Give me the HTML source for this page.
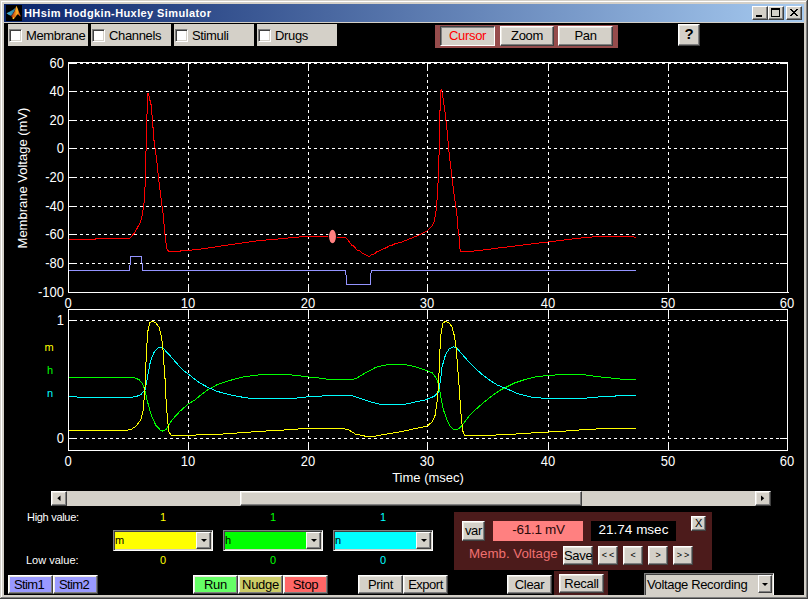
<!DOCTYPE html>
<html><head><meta charset="utf-8"><title>HHsim Hodgkin-Huxley Simulator</title>
<style>
html,body{margin:0;padding:0;background:#000;}
body{width:808px;height:599px;overflow:hidden;position:relative;font-family:"Liberation Sans",Arial,sans-serif;font-size:13px;color:#000;}
#win{position:absolute;left:0;top:0;width:808px;height:599px;background:#000;overflow:hidden;}
.abs,#win div,#win span{position:absolute;box-sizing:border-box;white-space:nowrap;}
/* frame */
.fr{background:#d4d0c8;}
#title{left:4px;top:4px;width:800px;height:18px;background:linear-gradient(90deg,#0a246a 0%,#a6caf0 100%);}
#ttext{left:20px;top:1px;color:#fff;font-weight:bold;font-size:11px;line-height:16px;letter-spacing:0.4px;font-family:"Liberation Sans",sans-serif;}
.tb{top:2px;width:16px;height:14px;background:#d4d0c8;border:1px solid;border-color:#fff #404040 #404040 #fff;box-shadow:inset -1px -1px 0 #808080;}
/* generic button */
.btn{background:#d4d0c8;border:1px solid;border-color:#fff #404040 #404040 #fff;box-shadow:inset -1px -1px 0 #808080, inset 1px 1px 0 #ece9e2;text-align:center;font-size:13px;line-height:17px;color:#000;letter-spacing:-0.3px;}
.sunk{border-color:#404040 #fff #fff #404040;box-shadow:inset 1px 1px 0 #808080;}
.cbp{top:24px;width:80px;height:22px;background:#d4d0c8;font-size:13px;line-height:23px;}
.cb{left:1px;top:5px;width:13px;height:13px;background:#fff;border:1px solid;border-color:#808080 #fff #fff #808080;box-shadow:inset 1px 1px 0 #404040, inset -1px -1px 0 #d4d0c8;}
.cbt{left:18px;top:0;letter-spacing:-0.35px;}
.plot{position:absolute;left:0;top:0;}
.plot .g{stroke-dasharray:3 3;}
.yl{left:9px;width:55px;text-align:right;color:#fff;font-size:13px;line-height:16px;height:16px;transform:scaleY(1.08);transform-origin:50% 50%;}
.xl{width:40px;text-align:center;color:#fff;font-size:13px;line-height:16px;height:16px;transform:scaleY(1.08);transform-origin:50% 50%;}
.sm{font-size:11px;line-height:13px;}
.pop{height:21px;border:1px solid;border-color:#808080 #fff #fff #808080;box-shadow:inset 1px 1px 0 #404040, inset -1px -1px 0 #d4d0c8;}
.pop .pt{left:1px;top:2px;font-size:11px;line-height:14px;color:#000;}
.pop .ab{right:1px;top:1px;width:15px;height:17px;background:#d4d0c8;border:1px solid;border-color:#fff #404040 #404040 #fff;box-shadow:inset -1px -1px 0 #808080;}
.tri{width:0;height:0;border-left:3px solid transparent;border-right:3px solid transparent;border-top:3px solid #000;}
</style></head><body>
<div id="win">
<!-- window frame -->
<div class="fr" style="left:0;top:0;width:808px;height:23px"></div>
<div class="fr" style="left:0;top:0;width:4px;height:599px"></div>
<div class="fr" style="left:804px;top:0;width:4px;height:599px"></div>
<div class="fr" style="left:0;top:595px;width:808px;height:4px"></div>
<div style="left:1px;top:1px;width:805px;height:1px;background:#fff"></div>
<div style="left:1px;top:1px;width:1px;height:596px;background:#fff"></div>
<div style="left:806px;top:1px;width:1px;height:597px;background:#808080"></div>
<div style="left:1px;top:597px;width:806px;height:1px;background:#808080"></div>
<div style="left:807px;top:0;width:1px;height:599px;background:#404040"></div>
<div style="left:0;top:598px;width:808px;height:1px;background:#404040"></div>
<div id="title">
  <div style="left:2px;top:1px;width:16px;height:16px;background:#000"></div>
  <svg style="position:absolute;left:2px;top:1px" width="16" height="16" viewBox="0 0 16 16">
    <defs>
      <linearGradient id="og" x1="0" y1="0" x2="1" y2="0"><stop offset="0" stop-color="#b5300f"/><stop offset="0.45" stop-color="#f08a1c"/><stop offset="0.6" stop-color="#fbc02d"/><stop offset="0.8" stop-color="#e65a14"/><stop offset="1" stop-color="#c0390f"/></linearGradient>
      <linearGradient id="bg" x1="0" y1="0" x2="1" y2="0"><stop offset="0" stop-color="#46b4dc"/><stop offset="1" stop-color="#2a7896"/></linearGradient>
    </defs>
    <polygon points="0.5,8.2 4,6.6 7.4,4.4 9.6,2.4 8.6,6 6.5,9 5,10.8 3,10" fill="url(#bg)"/>
    <polygon points="5,10.8 6.5,9 8.6,6 9.6,2.6 9.2,7 7,10.5 5.6,11.4" fill="#6b3a3a"/>
    <polygon points="10.3,0.8 11.5,3 13,7 15,11.8 13.5,10.8 12,9.3 11,9.8 9.5,12 8,13.8 7,14.3 6.3,12.5 5.4,11.2 7,9.4 8.7,6.4 9.6,3" fill="url(#og)"/>
    <polygon points="6.6,13 8,12 8.2,13.6 7,14.3" fill="#fdd835"/>
  </svg>
  <div id="ttext">HHsim Hodgkin-Huxley Simulator</div>
  <div class="tb" style="left:748px"><div style="left:3px;top:8px;width:6px;height:2px;background:#000"></div></div>
  <div class="tb" style="left:764px"><div style="left:2px;top:1px;width:9px;height:9px;border:1px solid #000;border-top-width:2px"></div></div>
  <div class="tb" style="left:782px"><svg style="position:absolute;left:3px;top:2px" width="8" height="7" viewBox="0 0 8 7" shape-rendering="crispEdges"><path d="M0 0h2v1h-2zM6 0h2v1h-2zM1 1h2v1h-2zM5 1h2v1h-2zM2 2h4v1h-4zM3 3h2v1h-2zM2 4h4v1h-4zM1 5h2v1h-2zM5 5h2v1h-2zM0 6h2v1h-2zM6 6h2v1h-2z" fill="#000"/></svg></div>
</div>

<!-- top row -->
<div class="cbp" style="left:8px"><div class="cb"></div><div class="cbt">Membrane</div></div>
<div class="cbp" style="left:91px"><div class="cb"></div><div class="cbt">Channels</div></div>
<div class="cbp" style="left:174px"><div class="cb"></div><div class="cbt">Stimuli</div></div>
<div class="cbp" style="left:257px"><div class="cb"></div><div class="cbt">Drugs</div></div>

<div style="left:435px;top:25px;width:183px;height:23px;background:#964c4c"></div>
<div class="btn sunk" style="left:440px;top:26px;width:55px;height:20px;color:#f00;line-height:18px">Cursor</div>
<div class="btn" style="left:500px;top:26px;width:54px;height:20px;line-height:18px">Zoom</div>
<div class="btn" style="left:558px;top:26px;width:55px;height:20px;line-height:18px">Pan</div>
<div class="btn" style="left:678px;top:24px;width:22px;height:22px;font-weight:bold;font-size:15px;line-height:18px;letter-spacing:0">?</div>

<svg class="plot" width="808" height="599" viewBox="0 0 808 599" shape-rendering="crispEdges">
<g fill="none" stroke="#fff" stroke-width="1">
<line x1="68" y1="63.5" x2="788" y2="63.5" class="g"/>
<line x1="68" y1="91.5" x2="788" y2="91.5" class="g"/>
<line x1="68" y1="120.5" x2="788" y2="120.5" class="g"/>
<line x1="68" y1="148.5" x2="788" y2="148.5" class="g"/>
<line x1="68" y1="177.5" x2="788" y2="177.5" class="g"/>
<line x1="68" y1="206.5" x2="788" y2="206.5" class="g"/>
<line x1="68" y1="234.5" x2="788" y2="234.5" class="g"/>
<line x1="68" y1="263.5" x2="788" y2="263.5" class="g"/>
<line x1="188.5" y1="293" x2="188.5" y2="63" class="g"/>
<line x1="308.5" y1="293" x2="308.5" y2="63" class="g"/>
<line x1="427.5" y1="293" x2="427.5" y2="63" class="g"/>
<line x1="548.5" y1="293" x2="548.5" y2="63" class="g"/>
<line x1="668.5" y1="293" x2="668.5" y2="63" class="g"/>
<line x1="68" y1="320.5" x2="788" y2="320.5" class="g"/>
<line x1="68" y1="438.5" x2="788" y2="438.5" class="g"/>
<line x1="188.5" y1="451" x2="188.5" y2="310" class="g"/>
<line x1="308.5" y1="451" x2="308.5" y2="310" class="g"/>
<line x1="427.5" y1="451" x2="427.5" y2="310" class="g"/>
<line x1="548.5" y1="451" x2="548.5" y2="310" class="g"/>
<line x1="668.5" y1="451" x2="668.5" y2="310" class="g"/>
<line x1="68" y1="63.5" x2="76" y2="63.5" class="a"/>
<line x1="780" y1="63.5" x2="788" y2="63.5" class="a"/>
<line x1="68" y1="91.5" x2="76" y2="91.5" class="a"/>
<line x1="780" y1="91.5" x2="788" y2="91.5" class="a"/>
<line x1="68" y1="120.5" x2="76" y2="120.5" class="a"/>
<line x1="780" y1="120.5" x2="788" y2="120.5" class="a"/>
<line x1="68" y1="148.5" x2="76" y2="148.5" class="a"/>
<line x1="780" y1="148.5" x2="788" y2="148.5" class="a"/>
<line x1="68" y1="177.5" x2="76" y2="177.5" class="a"/>
<line x1="780" y1="177.5" x2="788" y2="177.5" class="a"/>
<line x1="68" y1="206.5" x2="76" y2="206.5" class="a"/>
<line x1="780" y1="206.5" x2="788" y2="206.5" class="a"/>
<line x1="68" y1="234.5" x2="76" y2="234.5" class="a"/>
<line x1="780" y1="234.5" x2="788" y2="234.5" class="a"/>
<line x1="68" y1="263.5" x2="76" y2="263.5" class="a"/>
<line x1="780" y1="263.5" x2="788" y2="263.5" class="a"/>
<line x1="68" y1="292.5" x2="76" y2="292.5" class="a"/>
<line x1="780" y1="292.5" x2="788" y2="292.5" class="a"/>
<line x1="68.5" y1="285" x2="68.5" y2="293" class="a"/>
<line x1="68.5" y1="62" x2="68.5" y2="70" class="a"/>
<line x1="68.5" y1="443" x2="68.5" y2="451" class="a"/>
<line x1="68.5" y1="309" x2="68.5" y2="317" class="a"/>
<line x1="188.5" y1="285" x2="188.5" y2="293" class="a"/>
<line x1="188.5" y1="62" x2="188.5" y2="70" class="a"/>
<line x1="188.5" y1="443" x2="188.5" y2="451" class="a"/>
<line x1="188.5" y1="309" x2="188.5" y2="317" class="a"/>
<line x1="308.5" y1="285" x2="308.5" y2="293" class="a"/>
<line x1="308.5" y1="62" x2="308.5" y2="70" class="a"/>
<line x1="308.5" y1="443" x2="308.5" y2="451" class="a"/>
<line x1="308.5" y1="309" x2="308.5" y2="317" class="a"/>
<line x1="427.5" y1="285" x2="427.5" y2="293" class="a"/>
<line x1="427.5" y1="62" x2="427.5" y2="70" class="a"/>
<line x1="427.5" y1="443" x2="427.5" y2="451" class="a"/>
<line x1="427.5" y1="309" x2="427.5" y2="317" class="a"/>
<line x1="548.5" y1="285" x2="548.5" y2="293" class="a"/>
<line x1="548.5" y1="62" x2="548.5" y2="70" class="a"/>
<line x1="548.5" y1="443" x2="548.5" y2="451" class="a"/>
<line x1="548.5" y1="309" x2="548.5" y2="317" class="a"/>
<line x1="668.5" y1="285" x2="668.5" y2="293" class="a"/>
<line x1="668.5" y1="62" x2="668.5" y2="70" class="a"/>
<line x1="668.5" y1="443" x2="668.5" y2="451" class="a"/>
<line x1="668.5" y1="309" x2="668.5" y2="317" class="a"/>
<line x1="787.5" y1="285" x2="787.5" y2="293" class="a"/>
<line x1="787.5" y1="62" x2="787.5" y2="70" class="a"/>
<line x1="787.5" y1="443" x2="787.5" y2="451" class="a"/>
<line x1="787.5" y1="309" x2="787.5" y2="317" class="a"/>
<line x1="68" y1="320.5" x2="76" y2="320.5" class="a"/>
<line x1="780" y1="320.5" x2="788" y2="320.5" class="a"/>
<line x1="68" y1="438.5" x2="76" y2="438.5" class="a"/>
<line x1="780" y1="438.5" x2="788" y2="438.5" class="a"/>
</g>
<g fill="none" stroke-width="1">
<polyline stroke="#9494ff" points="68.2,270.6 129.5,270.6 130.7,256.7 141.5,256.7 142.7,270.6 345.7,270.6 346.7,284.8 370.0,284.8 371.2,270.6 636.2,270.6"/>
<polyline stroke="#ff0000" points="68.2,239.9 95.6,239.9 95.8,238.9 129.5,238.6 134.5,233.0 138.2,226.3 140.4,222.1 142.4,214.2 143.5,207.3 144.4,200.3 145.2,183.8 145.5,158.3 146.7,140.3 146.7,114.3 147.9,113.6 147.9,92.6 149.0,96.3 151.2,105.3 152.7,123.3 154.2,142.9 156.7,159.8 158.5,177.8 162.0,206.3 162.8,210.3 164.2,226.3 165.5,239.9 167.2,249.8 169.2,251.8 177.0,251.3 188.9,250.3 202.8,248.8 220.0,246.2 239.8,243.3 259.6,240.5 279.4,238.9 293.2,237.5 305.2,236.5 328.9,236.5 340.2,237.8 345.8,237.8 349.5,242.0 352.1,245.5 354.3,246.3 356.2,249.3 358.0,250.6 359.9,250.8 362.5,253.3 365.1,254.7 367.3,255.8 369.2,256.9 371.4,254.9 374.0,254.3 376.6,251.9 378.8,251.3 381.0,249.8 383.3,248.7 386.2,247.8 388.5,246.2 391.4,245.6 394.4,244.0 397.4,243.1 400.2,242.6 409.5,238.9 419.4,235.0 427.3,231.0 431.3,227.0 433.7,223.1 435.0,216.9 435.6,214.2 436.5,206.3 437.7,192.1 438.9,158.3 439.5,140.3 439.5,110.6 440.7,109.8 440.7,90.3 441.5,89.6 442.2,92.6 444.5,108.3 446.7,126.3 448.7,148.9 449.7,158.3 452.0,177.8 454.2,195.8 456.0,207.8 457.0,216.1 457.7,226.3 459.0,235.9 460.2,251.4 470.9,251.4 484.8,249.8 500.0,247.8 519.8,245.4 548.5,241.9 569.3,239.3 585.2,237.5 599.0,236.5 632.7,236.5 635.6,237.5"/>
<polyline stroke="#00ff00" points="69.0,377.7 134.7,377.7 139.1,379.8 142.2,383.3 144.7,389.3 147.4,401.3 151.3,415.3 155.7,425.0 160.1,429.9 162.7,431.1 166.2,429.4 168.8,425.0 172.3,419.7 179.4,411.8 188.1,404.0 195.1,399.9 199.0,396.4 207.7,389.9 216.5,385.0 225.2,382.0 234.0,379.2 242.8,377.1 251.5,375.7 260.3,374.8 290.1,374.8 302.3,376.2 312.9,377.4 321.6,378.3 330.7,379.7 351.7,379.7 357.0,378.0 365.8,372.7 376.3,367.1 386.8,364.8 406.1,364.8 414.8,366.6 425.3,370.1 432.3,372.7 436.7,378.8 439.0,386.8 440.7,396.3 443.3,409.4 447.7,421.8 450.7,427.0 454.2,429.7 457.7,429.5 461.7,426.0 468.7,416.4 475.8,409.4 482.8,403.2 491.5,396.2 500.3,390.1 505.5,387.5 514.3,383.1 524.8,379.6 535.3,376.9 549.4,375.2 560.2,374.8 584.9,374.8 597.2,376.7 607.7,377.6 615.5,378.5 626.1,379.7 636.0,379.7"/>
<polyline stroke="#00ffff" points="69.0,396.8 76.8,396.8 77.2,397.8 121.5,397.8 135.5,396.8 140.8,394.7 145.2,389.4 147.8,375.4 150.4,361.4 153.9,352.6 157.4,348.2 160.4,347.3 163.6,348.8 168.8,354.3 175.8,362.3 182.9,370.1 189.9,375.4 199.0,382.4 207.7,387.3 216.5,391.1 225.2,393.7 237.5,396.4 251.5,398.5 291.8,398.5 309.4,396.7 327.2,395.7 351.7,395.7 358.7,397.8 369.3,401.6 381.5,404.6 402.6,404.6 413.1,402.5 425.3,399.9 434.1,396.4 438.5,392.0 440.2,382.4 442.1,366.6 445.6,354.4 449.1,349.1 453.5,346.8 457.0,348.2 462.3,354.4 469.3,362.3 476.3,369.3 483.3,375.4 490.3,380.6 497.3,385.0 505.5,388.3 517.8,393.6 531.8,397.1 545.8,398.5 586.6,398.5 587.5,397.6 603.3,396.7 619.1,395.8 636.0,395.8"/>
<polyline stroke="#ffff00" points="69.0,430.8 124.2,430.8 131.2,429.4 136.4,425.9 140.8,419.7 142.9,411.8 144.8,392.3 146.4,352.6 147.8,331.6 149.6,322.8 152.2,321.4 155.7,322.8 159.2,327.2 161.0,335.1 162.7,345.6 163.9,363.1 165.3,382.4 166.2,403.1 168.0,424.1 168.8,432.0 171.5,435.5 190.2,435.8 197.2,434.9 223.5,434.0 242.8,432.6 260.3,431.4 274.3,430.5 290.1,429.7 305.8,428.4 343.0,428.4 349.1,430.0 355.2,434.0 365.8,436.3 374.5,436.3 386.8,434.0 402.6,431.4 418.3,427.9 427.1,426.2 432.3,421.8 435.0,415.6 436.7,405.1 438.5,386.3 439.8,352.6 441.2,331.6 443.0,322.8 445.6,321.4 449.1,322.8 452.1,327.2 454.4,336.0 456.1,347.4 457.5,364.9 459.1,386.6 460.9,412.9 462.6,430.4 464.4,435.3 489.8,435.3 517.8,433.9 535.3,432.7 553.3,431.8 567.4,430.9 583.1,429.7 599.8,428.8 636.0,428.8"/>
</g>
<g fill="none" stroke="#fff" stroke-width="1"><rect x="68.5" y="62.5" width="719" height="230" class="a"/>
<line x1="787" y1="292.5" x2="789" y2="292.5"/>
<rect x="68.5" y="309.5" width="719" height="141" class="a"/>
</g>
<ellipse cx="332.5" cy="236.5" rx="4.4" ry="7.7" fill="#000" shape-rendering="auto"/>
<ellipse cx="332.5" cy="236.5" rx="3.45" ry="6.8" fill="#ff8080" shape-rendering="auto"/>
</svg>
<div class="yl" style="top:56px">60</div>
<div class="yl" style="top:84px">40</div>
<div class="yl" style="top:113px">20</div>
<div class="yl" style="top:141px">0</div>
<div class="yl" style="top:170px">-20</div>
<div class="yl" style="top:199px">-40</div>
<div class="yl" style="top:227px">-60</div>
<div class="yl" style="top:256px">-80</div>
<div class="yl" style="top:285px">-100</div>
<div class="xl" style="left:48px;top:296px">0</div>
<div class="xl" style="left:48px;top:454px">0</div>
<div class="xl" style="left:168px;top:296px">10</div>
<div class="xl" style="left:168px;top:454px">10</div>
<div class="xl" style="left:288px;top:296px">20</div>
<div class="xl" style="left:288px;top:454px">20</div>
<div class="xl" style="left:407px;top:296px">30</div>
<div class="xl" style="left:407px;top:454px">30</div>
<div class="xl" style="left:528px;top:296px">40</div>
<div class="xl" style="left:528px;top:454px">40</div>
<div class="xl" style="left:648px;top:296px">50</div>
<div class="xl" style="left:648px;top:454px">50</div>
<div class="xl" style="left:767px;top:296px">60</div>
<div class="xl" style="left:767px;top:454px">60</div>
<div class="yl" style="top:313px">1</div>
<div class="yl" style="top:431px">0</div>
<div style="left:-57px;top:170px;width:160px;height:16px;text-align:center;color:#fff;font-size:13px;line-height:16px;transform:rotate(-90deg);">Membrane Voltage (mV)</div>
<div style="left:368px;top:470px;width:120px;text-align:center;color:#fff;font-size:13px;line-height:16px">Time (msec)</div>
<div class="sm" style="left:44.500px;top:341px;color:#ff0">m</div>
<div class="sm" style="left:47px;top:364px;color:#0f0">h</div>
<div class="sm" style="left:47px;top:387px;color:#0ff">n</div>

<!-- scrollbar -->
<div style="left:51px;top:491px;width:720px;height:15px;background:#d4d0c8"></div>
<div class="btn" style="left:51px;top:491px;width:16px;height:15px"><svg style="position:absolute;left:5px;top:2.5px" width="4" height="7" viewBox="0 0 4 7"><path d="M3.500 0.500v5.500L0.300 3.250z" fill="#000"/></svg></div>
<div class="btn" style="left:755px;top:491px;width:16px;height:15px"><svg style="position:absolute;left:5px;top:2.5px" width="4" height="7" viewBox="0 0 4 7"><path d="M0 0.500v5.500L3.200 3.250z" fill="#000"/></svg></div>
<div class="btn" style="left:240px;top:491px;width:342px;height:15px"></div>

<!-- value labels -->
<div class="sm" style="left:27px;top:511px;color:#fff;letter-spacing:-0.3px">High value:</div>
<div class="sm" style="left:26px;top:554px;color:#fff">Low value:</div>
<div class="sm" style="left:143px;top:511px;width:40px;text-align:center;color:#ff0">1</div>
<div class="sm" style="left:143px;top:554px;width:40px;text-align:center;color:#ff0">0</div>
<div class="sm" style="left:253px;top:511px;width:40px;text-align:center;color:#0f0">1</div>
<div class="sm" style="left:253px;top:554px;width:40px;text-align:center;color:#0f0">0</div>
<div class="sm" style="left:363px;top:511px;width:40px;text-align:center;color:#0ff">1</div>
<div class="sm" style="left:363px;top:554px;width:40px;text-align:center;color:#0ff">0</div>

<div class="pop" style="left:113px;top:530px;width:100px;background:#ff0"><div class="pt">m</div><div class="ab"><div class="tri" style="left:4px;top:6px"></div></div></div>
<div class="pop" style="left:223px;top:530px;width:100px;background:#0f0"><div class="pt">h</div><div class="ab"><div class="tri" style="left:4px;top:6px"></div></div></div>
<div class="pop" style="left:333px;top:530px;width:100px;background:#0ff"><div class="pt">n</div><div class="ab"><div class="tri" style="left:4px;top:6px"></div></div></div>

<!-- bottom buttons -->
<div class="btn" style="left:8px;top:575px;width:45px;height:19px;background:#9999ff;letter-spacing:-0.6px;padding-right:3px">Stim1</div>
<div class="btn" style="left:53px;top:575px;width:45px;height:19px;background:#9999ff;letter-spacing:-0.6px;padding-right:3px">Stim2</div>
<div class="btn" style="left:193px;top:575px;width:45px;height:19px;background:#66ff66">Run</div>
<div class="btn" style="left:238px;top:575px;width:45px;height:19px;background:#cccc66">Nudge</div>
<div class="btn" style="left:283px;top:575px;width:45px;height:19px;background:#ff6666">Stop</div>
<div class="btn" style="left:358px;top:575px;width:45px;height:19px">Print</div>
<div class="btn" style="left:403px;top:575px;width:45px;height:19px;letter-spacing:-0.5px">Export</div>
<div class="btn" style="left:507px;top:575px;width:45px;height:19px">Clear</div>
<div style="left:554px;top:571px;width:54px;height:24px;background:#4c1b1b"></div>
<div class="btn" style="left:559px;top:574px;width:45px;height:19px">Recall</div>

<!-- cursor panel -->
<div style="left:454px;top:512px;width:258px;height:58px;background:#4c1b1b"></div>
<div class="btn" style="left:462px;top:521px;width:23px;height:20px;line-height:17px">var</div>
<div style="left:493px;top:521px;width:90px;height:20px;background:#ff8080;color:#2a0a0a;text-align:center;line-height:17px;font-size:13.500px;padding-left:1px;letter-spacing:-0.3px">-61.1 mV</div>
<div style="left:591px;top:521px;width:85px;height:20px;background:#000;color:#fff;text-align:center;line-height:17px;font-size:13.500px">21.74 msec</div>
<div class="btn" style="left:691px;top:516px;width:15px;height:15px;font-size:11px;line-height:12px">X</div>
<div style="left:469px;top:545px;color:#f07070;line-height:18px;font-size:13.300px">Memb. Voltage</div>
<div class="btn" style="left:563px;top:546px;width:30px;height:19px">Save</div>
<div class="btn" style="left:598px;top:546px;width:20px;height:19px;font-size:9px;letter-spacing:2px;text-indent:2px">&lt;&lt;</div>
<div class="btn" style="left:623px;top:546px;width:20px;height:19px;font-size:9px">&lt;</div>
<div class="btn" style="left:648px;top:546px;width:20px;height:19px;font-size:9px">&gt;</div>
<div class="btn" style="left:673px;top:546px;width:20px;height:19px;font-size:9px;letter-spacing:2px;text-indent:2px">&gt;&gt;</div>

<div class="pop" style="left:644px;top:573px;width:130px;height:22px;background:#d4d0c8;border-bottom:none;box-shadow:inset 1px 1px 0 #404040, inset -1px 0 0 #d4d0c8"><div class="pt" style="font-size:13px;left:2px;top:3px;line-height:16px;letter-spacing:-0.35px">Voltage Recording</div><div class="ab" style="height:18px;width:14px;right:1px;top:1px"><div class="tri" style="left:3px;top:7px"></div></div></div>

</div>
</body></html>
